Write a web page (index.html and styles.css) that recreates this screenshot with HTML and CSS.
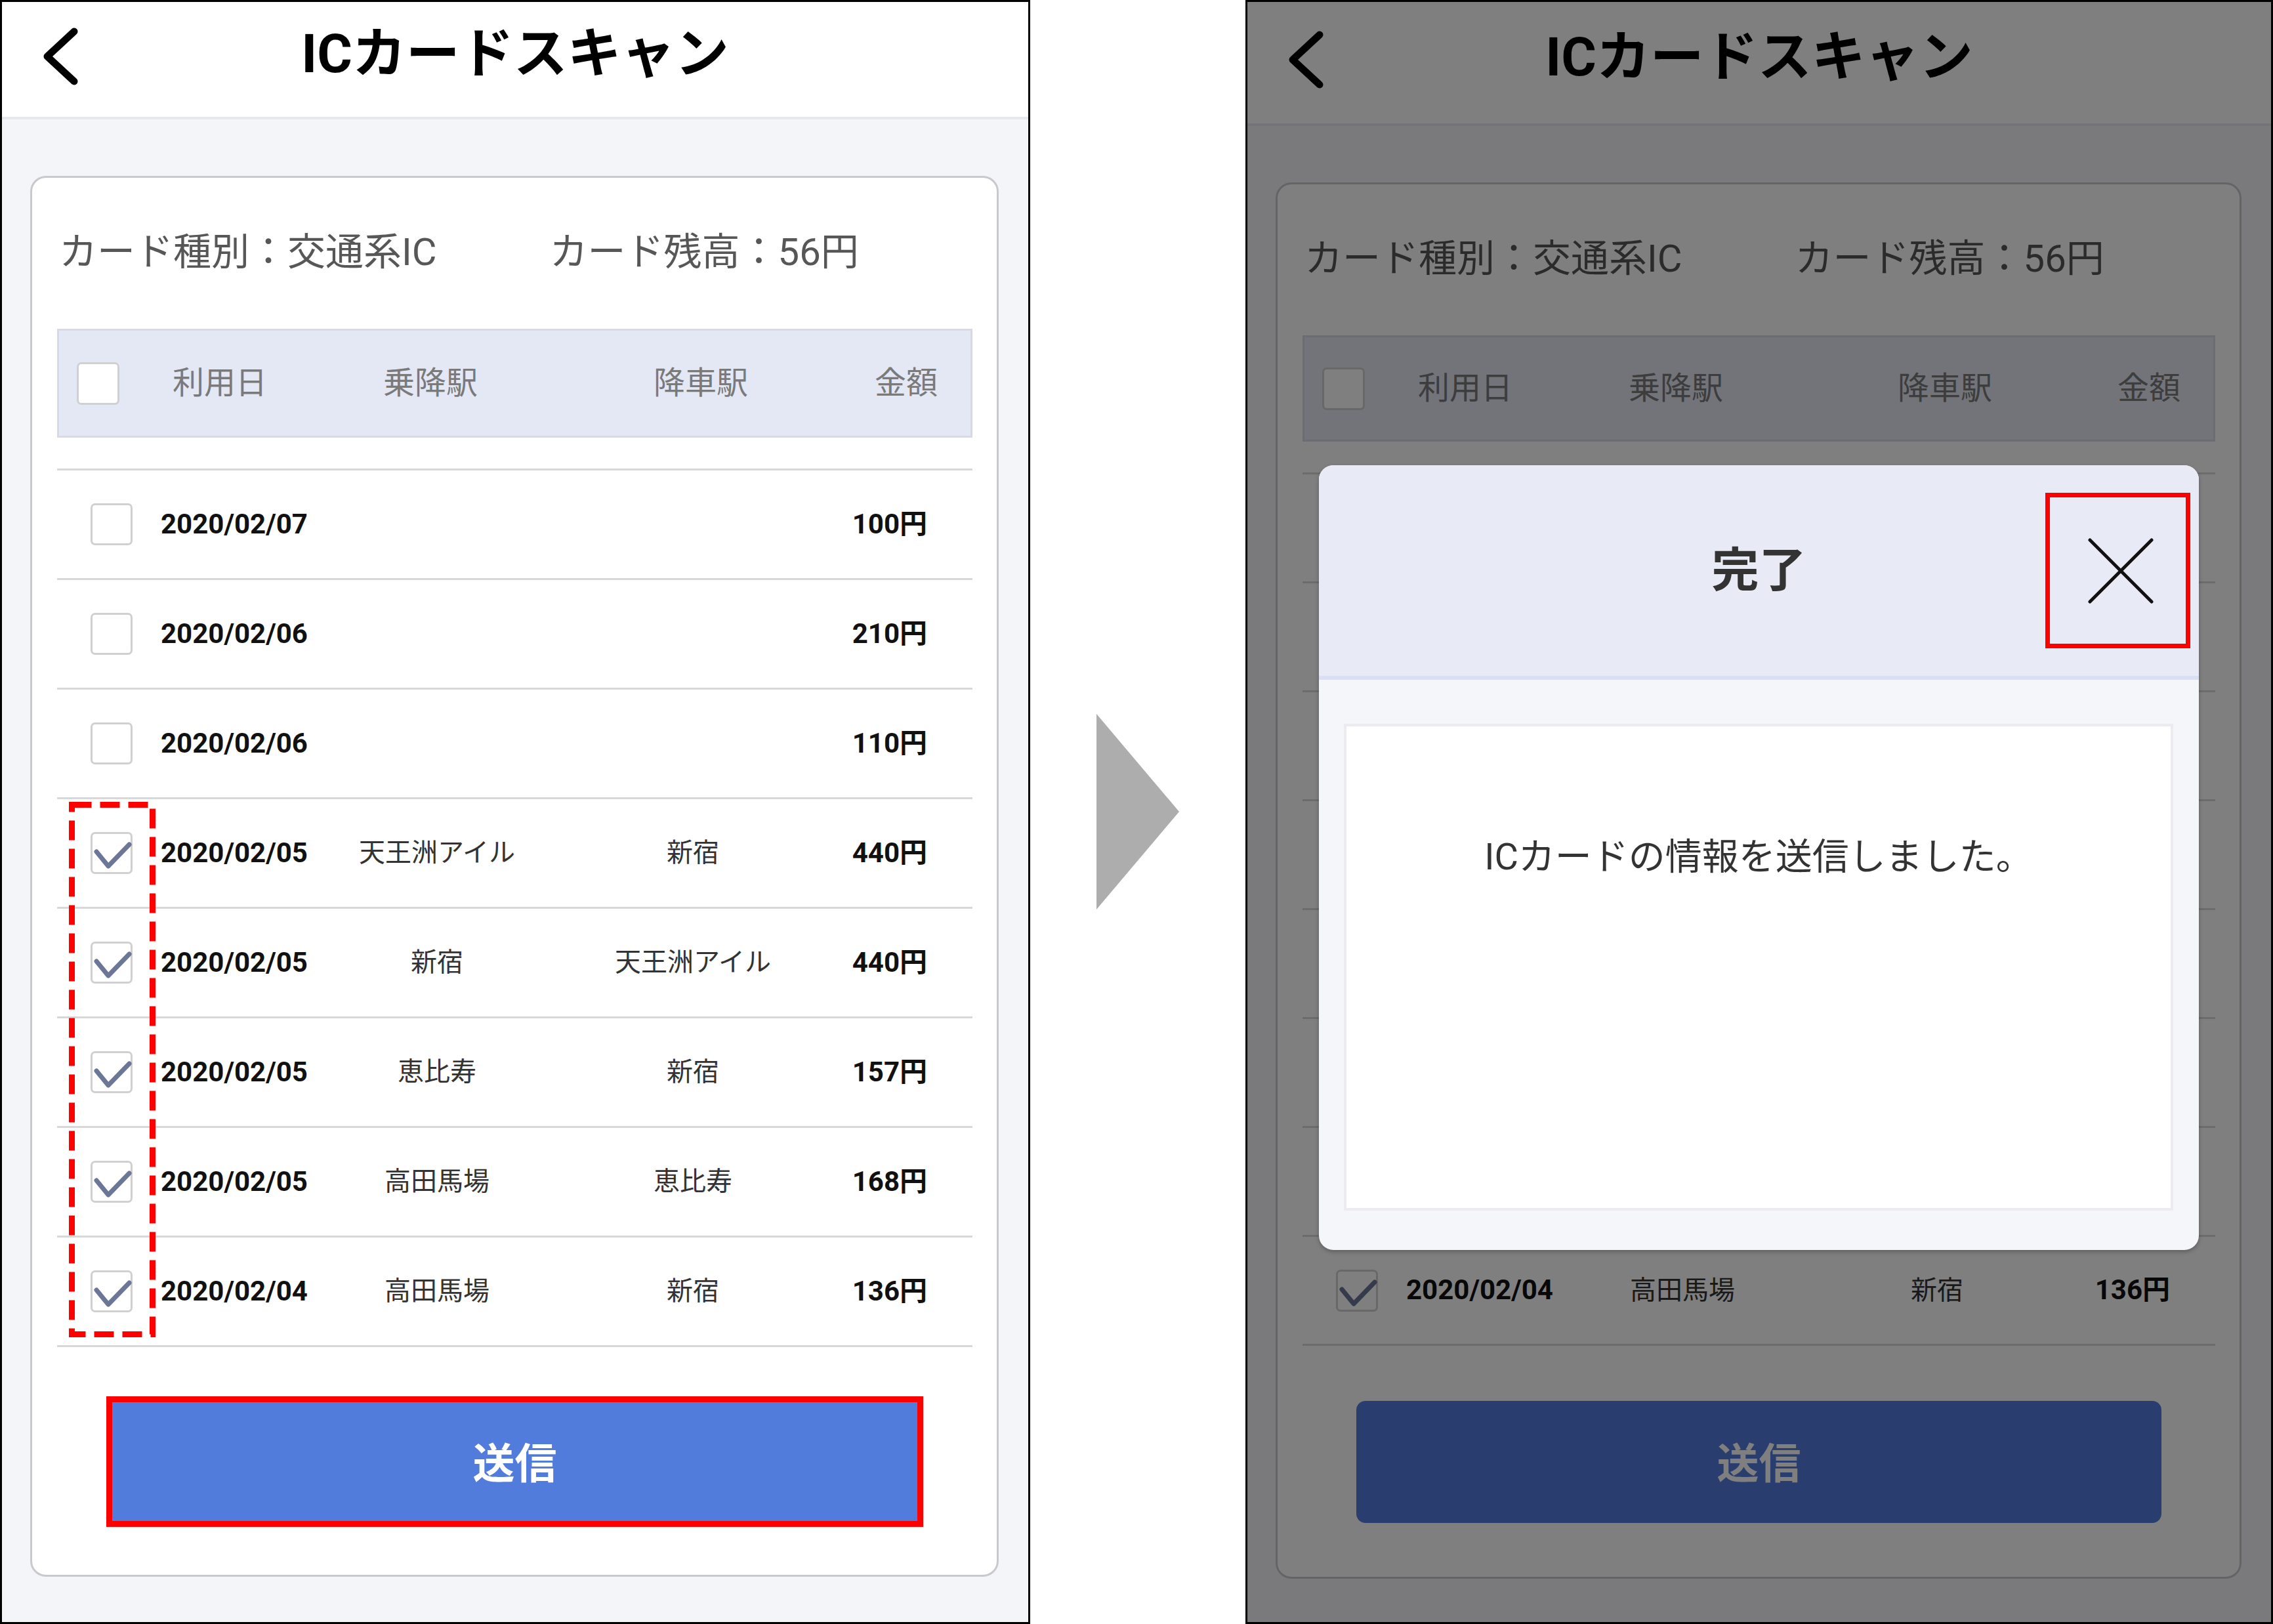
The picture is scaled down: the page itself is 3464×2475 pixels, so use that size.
FILE: index.html
```html
<!DOCTYPE html>
<html lang="ja">
<head>
<meta charset="utf-8">
<title>ICカードスキャン</title>
<link rel="stylesheet" href="styles.css">
</head>
<body>
<div class="stage">

  <section class="phone phone--before">
    <header class="appbar">
      <svg class="back" viewBox="0 0 66 92" width="66" height="92"><polyline points="53,8 12,46 53,84" /></svg>
      <h1 class="title">ICカードスキャン</h1>
      <span></span>
    </header>
    <main class="screen">
      <div class="card">
        <div class="info"><span>カード種別：交通系IC</span><span>カード残高：56円</span></div>
        <div class="thead">
          <span class="box"></span>
          <span class="th th--date">利用日</span>
          <span class="th th--mid">乗降駅</span>
          <span class="th th--mid">降車駅</span>
          <span class="th th--amt">金額</span>
        </div>
        <ul class="rows">
          <li class="row"><span class="box"></span><span class="date">2020/02/07</span><span class="st"></span><span class="st"></span><span class="amt">100円</span></li>
          <li class="row"><span class="box"></span><span class="date">2020/02/06</span><span class="st"></span><span class="st"></span><span class="amt">210円</span></li>
          <li class="row"><span class="box"></span><span class="date">2020/02/06</span><span class="st"></span><span class="st"></span><span class="amt">110円</span></li>
          <li class="row"><span class="box"><svg class="tick" viewBox="0 0 64 64"><polyline points="9,30 27,52 59,19"/></svg></span><span class="date">2020/02/05</span><span class="st">天王洲アイル</span><span class="st">新宿</span><span class="amt">440円</span></li>
          <li class="row"><span class="box"><svg class="tick" viewBox="0 0 64 64"><polyline points="9,30 27,52 59,19"/></svg></span><span class="date">2020/02/05</span><span class="st">新宿</span><span class="st">天王洲アイル</span><span class="amt">440円</span></li>
          <li class="row"><span class="box"><svg class="tick" viewBox="0 0 64 64"><polyline points="9,30 27,52 59,19"/></svg></span><span class="date">2020/02/05</span><span class="st">恵比寿</span><span class="st">新宿</span><span class="amt">157円</span></li>
          <li class="row"><span class="box"><svg class="tick" viewBox="0 0 64 64"><polyline points="9,30 27,52 59,19"/></svg></span><span class="date">2020/02/05</span><span class="st">高田馬場</span><span class="st">恵比寿</span><span class="amt">168円</span></li>
          <li class="row"><span class="box"><svg class="tick" viewBox="0 0 64 64"><polyline points="9,30 27,52 59,19"/></svg></span><span class="date">2020/02/04</span><span class="st">高田馬場</span><span class="st">新宿</span><span class="amt">136円</span></li>
        </ul>
        <div class="actions"><button class="send send--marked">送信</button></div>
      </div>
    </main>
    <svg class="mark-dashed" viewBox="0 0 132 816" width="132" height="816"><rect x="4.5" y="4.5" width="123" height="807" /></svg>
  </section>

  <div class="arrow">
    <svg viewBox="0 0 126 300" width="126" height="300"><polygon points="0,0 126,149 0,298" /></svg>
  </div>

  <section class="phone phone--after">
    <header class="appbar">
      <svg class="back" viewBox="0 0 66 92" width="66" height="92"><polyline points="53,8 12,46 53,84" /></svg>
      <h1 class="title">ICカードスキャン</h1>
      <span></span>
    </header>
    <main class="screen">
      <div class="card">
        <div class="info"><span>カード種別：交通系IC</span><span>カード残高：56円</span></div>
        <div class="thead">
          <span class="box"></span>
          <span class="th th--date">利用日</span>
          <span class="th th--mid">乗降駅</span>
          <span class="th th--mid">降車駅</span>
          <span class="th th--amt">金額</span>
        </div>
        <ul class="rows">
          <li class="row row--covered"><span class="box"></span><span class="date">2020/02/07</span><span class="st"></span><span class="st"></span><span class="amt">100円</span></li>
          <li class="row row--covered"><span class="box"></span><span class="date">2020/02/06</span><span class="st"></span><span class="st"></span><span class="amt">210円</span></li>
          <li class="row row--covered"><span class="box"></span><span class="date">2020/02/06</span><span class="st"></span><span class="st"></span><span class="amt">110円</span></li>
          <li class="row row--covered"><span class="box"></span><span class="date">2020/02/05</span><span class="st">天王洲アイル</span><span class="st">新宿</span><span class="amt">440円</span></li>
          <li class="row row--covered"><span class="box"></span><span class="date">2020/02/05</span><span class="st">新宿</span><span class="st">天王洲アイル</span><span class="amt">440円</span></li>
          <li class="row row--covered"><span class="box"></span><span class="date">2020/02/05</span><span class="st">恵比寿</span><span class="st">新宿</span><span class="amt">157円</span></li>
          <li class="row row--covered"><span class="box"></span><span class="date">2020/02/05</span><span class="st">高田馬場</span><span class="st">恵比寿</span><span class="amt">168円</span></li>
          <li class="row"><span class="box"><svg class="tick" viewBox="0 0 64 64"><polyline points="9,30 27,52 59,19"/></svg></span><span class="date">2020/02/04</span><span class="st">高田馬場</span><span class="st">新宿</span><span class="amt">136円</span></li>
        </ul>
        <div class="actions"><button class="send">送信</button></div>
      </div>
    </main>
    <div class="scrim"></div>
    <div class="dialog">
      <div class="dialog-head">
        <h2 class="dialog-title">完了</h2>
        <button class="dialog-close" aria-label="閉じる">
          <svg viewBox="0 0 100 100" width="100" height="100"><line x1="3" y1="3" x2="97" y2="97"/><line x1="97" y1="3" x2="3" y2="97"/></svg>
        </button>
      </div>
      <div class="dialog-body">
        <div class="dialog-msg">ICカードの情報を送信しました。</div>
      </div>
    </div>
  </section>

</div>
</body>
</html>
```

FILE: styles.css
```css
* { box-sizing: border-box; }

html, body {
  margin: 0;
  padding: 0;
  background: #ffffff;
}

body {
  width: 3464px;
  height: 2475px;
  overflow: hidden;
  font-family: "Roboto", "Noto Sans CJK JP", "Noto Sans", sans-serif;
  color: #333333;
}

.stage {
  display: flex;
  width: 3464px;
  height: 2475px;
}

/* ---------- phone frame ---------- */
.phone {
  position: relative;
  display: flex;
  flex-direction: column;
  height: 2475px;
  border: 3px solid #000000;
  background: #f4f5f9;
  overflow: hidden;
}

.phone--before { width: 1570px; }
.phone--after  { width: 1566px; }

.appbar {
  display: grid;
  grid-template-columns: 1fr auto 1fr;
  align-items: center;
  height: 179px;
  flex: none;
  background: #ffffff;
  border-bottom: 4px solid #e6e8ef;
}

.phone--after .appbar { height: 189px; }

.back {
  margin-left: 57px;
  margin-bottom: 10px;
  fill: none;
  stroke: #000000;
  stroke-width: 11;
  stroke-linecap: round;
  stroke-linejoin: round;
}

.title {
  margin: 0;
  padding-bottom: 18px;
  font-size: 82px;
  line-height: 1;
  font-weight: 700;
  color: #000000;
  white-space: nowrap;
}

/* ---------- screen ---------- */
.screen {
  flex: 1;
  padding: 86px 45px 0 43px;
}

.card {
  background: #ffffff;
  border: 3px solid #c9c9cd;
  border-radius: 24px;
  padding: 0 37px 82px 38px;
}

.info {
  display: flex;
  align-items: center;
  gap: 172px;
  height: 230px;
  padding: 0 0 2px 3px;
  font-size: 58px;
  line-height: 1.2;
  color: #575757;
  white-space: nowrap;
}

.thead {
  display: grid;
  grid-template-columns: 146px 207px 372px 1fr 135px;
  align-items: center;
  height: 166px;
  padding: 0 50px 0 27px;
  background: #e4e8f5;
  border: 3px solid #d7dae5;
}

.phone--after .thead { height: 162px; }

.th {
  font-size: 48px;
  line-height: 1.1;
  color: #7a7a7a;
  white-space: nowrap;
}

.th--date { text-align: left; }
.th--mid  { text-align: center; }
.th--amt  { text-align: right; }

.box {
  position: relative;
  display: block;
  width: 64px;
  height: 64px;
  background: #ffffff;
  border: 3px solid #d0d0d0;
  border-radius: 7px;
}

.thead .box { width: 65px; height: 65px; }

.tick {
  position: absolute;
  left: -3px;
  top: -3px;
  width: 64px;
  height: 64px;
  fill: none;
  stroke: #6c7798;
  stroke-width: 7;
  stroke-linecap: round;
  stroke-linejoin: round;
}

.rows {
  list-style: none;
  margin: 47px 0 0 0;
  padding: 0;
  border-top: 3px solid #d8d8d8;
}

.row {
  display: grid;
  grid-template-columns: 107px 235px 372px 1fr 153px;
  align-items: center;
  height: 167px;
  padding: 0 69px 0 51px;
  border-bottom: 3px solid #d8d8d8;
  line-height: 1.2;
}

.phone--after .row { height: 166px; }

/* rows hidden behind the dialog: only their divider lines show at the edges */
.row--covered > * { visibility: hidden; }

.date {
  font-size: 42px;
  font-weight: 700;
  color: #111111;
  white-space: nowrap;
}

.st {
  font-size: 40px;
  color: #333333;
  text-align: center;
  white-space: nowrap;
}

.amt {
  font-size: 42px;
  font-weight: 700;
  color: #111111;
  text-align: right;
  white-space: nowrap;
}

.actions {
  display: flex;
  justify-content: center;
  padding-top: 84px;
}

.send {
  width: 1227px;
  height: 186px;
  border: none;
  border-radius: 14px;
  background: #527cdc;
  color: #ffffff;
  font-family: inherit;
  font-size: 64px;
  font-weight: 700;
  padding: 0 0 6px 0;
}

.send--marked {
  height: 181px;
  border-radius: 0;
  outline: 9px solid #ff0000;
  outline-offset: 0;
}

/* annotation: dashed marker around checked boxes */
.mark-dashed {
  position: absolute;
  left: 102px;
  top: 1219px;
  fill: none;
  stroke: #ff0000;
  stroke-width: 9;
  stroke-dasharray: 30 13;
}

/* ---------- arrow ---------- */
.arrow {
  flex: 1;
  display: flex;
  align-items: center;
  justify-content: center;
}

.arrow polygon { fill: #adadad; }

/* ---------- dialog state ---------- */
.scrim {
  position: absolute;
  inset: 0;
  background: rgba(0, 0, 0, 0.5);
}

.dialog {
  position: absolute;
  left: 109px;
  top: 706px;
  width: 1341px;
  height: 1196px;
  display: flex;
  flex-direction: column;
  border-radius: 22px;
  overflow: hidden;
  background: #f5f6fa;
  box-shadow: 0 3px 6px rgba(0, 0, 0, 0.25);
}

.dialog-head {
  position: relative;
  display: flex;
  align-items: center;
  justify-content: center;
  height: 327px;
  flex: none;
  background: #e8eaf6;
  border-bottom: 6px solid #dadff1;
}

.dialog-title {
  margin: 0;
  font-size: 72px;
  font-weight: 700;
  color: #333333;
  line-height: 1;
}

.dialog-close {
  position: absolute;
  left: 1107px;
  top: 42px;
  width: 221px;
  height: 237px;
  display: flex;
  align-items: center;
  justify-content: center;
  padding: 0 0 0 8px;
  background: transparent;
  border: 7px solid #ff0000;
}

.dialog-close svg {
  stroke: #111111;
  stroke-width: 5;
  stroke-linecap: round;
}

.dialog-body {
  flex: 1;
  padding: 67px 39px 60px 38px;
}

.dialog-msg {
  height: 100%;
  background: #ffffff;
  border: 4px solid #ececf0;
  padding-top: 166px;
  font-size: 56px;
  color: #333333;
  text-align: center;
  line-height: 1.2;
}
```
